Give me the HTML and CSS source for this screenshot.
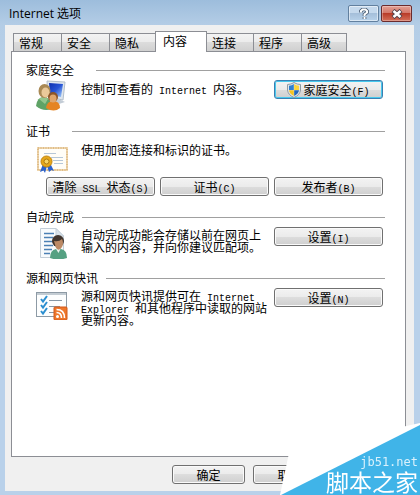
FILE: index.html
```html
<!DOCTYPE html>
<html lang="zh-CN">

<head>
    <meta charset="UTF-8">
    <title>Internet 选项</title>
    <link rel="stylesheet" href="styles.css">
</head>

<body>
    <div class="window">
        <!-- 标题栏 -->
        <div class="title-bar">
            <h1>Internet 选项</h1>
            <button type="button" class="win-btn" aria-label="帮助">
                <svg width="12" height="12" viewBox="0 0 12 12">
                    <path d="M3 4.500V3L4.500 1.500H7.500L9 3V4.500L6.500 6.500V8M6.500 9V11" fill="none" stroke="#44566c" stroke-width="3.6" />
                    <path d="M3 4.500V3L4.500 1.500H7.500L9 3V4.500L6.500 6.500V8M6.500 9V11" fill="none" stroke="#fff" stroke-width="2" />
                </svg>
            </button>
            <button type="button" class="win-btn win-close" aria-label="关闭">
                <svg width="12" height="10" viewBox="0 0 12 10">
                    <path d="M2 1.5L10 8.5M10 1.5L2 8.5" stroke="#53424a" stroke-width="4.4" />
                    <path d="M2.5 2L9.5 8M9.5 2L2.5 8" stroke="#fff" stroke-width="2.6" />
                </svg>
            </button>
        </div>

        <div class="client">
            <!-- 选项卡 -->
            <div class="tabs" role="tablist">
                <button type="button" role="tab" class="tab">常规</button>
                <button type="button" role="tab" class="tab">安全</button>
                <button type="button" role="tab" class="tab">隐私</button>
                <button type="button" role="tab" class="tab active" aria-selected="true">内容</button>
                <button type="button" role="tab" class="tab">连接</button>
                <button type="button" role="tab" class="tab">程序</button>
                <button type="button" role="tab" class="tab">高级</button>
            </div>

            <div class="panel">
                <div class="group">
                    <h2 class="group-title wide">家庭安全</h2>
                    <div class="row">
                        <svg class="icon" viewBox="0 0 32 32">
                            <defs>
                                <linearGradient id="screen" x1="0" y1="0" x2="1" y2="1">
                                    <stop offset="0" stop-color="#0d2fae" />
                                    <stop offset=".5" stop-color="#2855d6" />
                                    <stop offset="1" stop-color="#a9d4fa" />
                                </linearGradient>
                            </defs>
                            <path d="M11 1L29 2L27 20L12 17Z" fill="#dfe6ee" stroke="#b4bfca" />
                            <path d="M13 3L27 4L25 17L14 15Z" fill="url(#screen)" />
                            <path d="M19 19L25 20L29 22L23 24L17 22Z" fill="#c3ccd6" />
                            <path d="M0 26Q1 17 8 17Q15 17 16 29Q7 32 0 26Z" fill="#5fa366" />
                            <path d="M3 19Q8 15 12 19L9 24Z" fill="#93c68d" />
                            <ellipse cx="8.500" cy="11" rx="6" ry="7" fill="#a98955" />
                            <ellipse cx="9.500" cy="12.500" rx="4" ry="5" fill="#eac99a" />
                            <path d="M10 28Q11 21 17 21Q24 21 24 28Q18 33 10 28Z" fill="#e58422" />
                            <circle cx="17" cy="17" r="5" fill="#8c5528" />
                            <ellipse cx="17" cy="18.500" rx="3.500" ry="4" fill="#dfa66c" />
                        </svg>
                        <p>控制可查看的<span class="en"> Internet </span>内容。</p>
                        <button type="button" class="btn default">
                            <svg width="14" height="16" viewBox="0 0 14 16">
                                <path d="M7 .5Q10 2.500 13.500 2.500V8Q13 13 7 15.500Q1 13 .5 8V2.500Q4 2.500 7 .5Z" fill="#e3e8ea" stroke="#8e9aa3" />
                                <path d="M6.800 2V8H2V3.800Q5 3.600 6.800 2Z" fill="#2f7fd0" />
                                <path d="M7.200 2Q9 3.600 12 3.800V8H7.200Z" fill="#fbd43a" />
                                <path d="M2 8.300H6.800V14Q2.500 12 2 8.300Z" fill="#f5c523" />
                                <path d="M12 8.300H7.200V14Q11.500 12 12 8.300Z" fill="#2468bd" />
                            </svg>
                            <span>家庭安全<span class="en">(F)</span></span>
                        </button>
                    </div>
                </div>

                <div class="group">
                    <h2 class="group-title wide">证书</h2>
                    <div class="row">
                        <svg class="icon" viewBox="0 0 32 32">
                            <rect x="2" y="7" width="29" height="22" fill="#fffdf7" stroke="#eed6ad" stroke-width="2" />
                            <rect x="2" y="7" width="29" height="22" fill="none" stroke="#d9b27c" stroke-width="1.500" stroke-dasharray="1 1.500" />
                            <path d="M8 12.500H20M15 16.500H27M17 19.500H27M18 22.500H27" stroke="#b6c7d8" />
                            <path d="M7 23L4 31L7.500 29.500L9 32L11 25L13 31L15.500 29L18 30L14 22Z" fill="#2b62cd" />
                            <circle cx="10.500" cy="20.500" r="5.500" fill="#e6a719" stroke="#c0840e" />
                            <circle cx="10.500" cy="20.500" r="2.500" fill="#f7d563" stroke="#ad7912" />
                        </svg>
                        <p>使用加密连接和标识的证书。</p>
                    </div>
                    <div class="cert-buttons">
                        <button type="button" class="btn">清除<span class="en"> SSL </span>状态<span class="en">(S)</span></button>
                        <button type="button" class="btn">证书<span class="en">(C)</span></button>
                        <button type="button" class="btn">发布者<span class="en">(B)</span></button>
                    </div>
                </div>

                <div class="group">
                    <h2 class="group-title">自动完成</h2>
                    <div class="row">
                        <svg class="icon" viewBox="0 0 32 32">
                            <path d="M4.500 1.500H20L27.500 9V30.500H4.500Z" fill="#f8fbfd" stroke="#c3ced8" />
                            <path d="M20 1.500V9H27.500Z" fill="#d8e2ea" stroke="#c3ced8" />
                            <path d="M8 6.500H18M8 10.500H17M8 14.500H17M8 18.500H17M8 22.500H16M8 26.500H14" stroke="#4b80b5" stroke-width="1.500" />
                            <path d="M14 31Q14 23 20 22H25Q31 23 31 31Q22 34 14 31Z" fill="#55a182" />
                            <path d="M20 22L22.500 26L25 21Z" fill="#e8f1ed" />
                            <ellipse cx="22" cy="14" rx="6" ry="6" fill="#41352e" />
                            <path d="M18 14Q23 15 26 12Q28 16 26 20Q23 25 20 21Z" fill="#bc8a66" />
                        </svg>
                        <p class="multi">自动完成功能会存储以前在网页上<br>输入的内容，并向你建议匹配项。</p>
                        <button type="button" class="btn">设置<span class="en">(I)</span></button>
                    </div>
                </div>

                <div class="group">
                    <h2 class="group-title">源和网页快讯</h2>
                    <div class="row">
                        <svg class="icon" viewBox="0 0 32 32">
                            <rect x=".5" y="4.500" width="30" height="24" fill="#fdfefe" stroke="#8d9aa5" />
                            <path d="M1 6H30" stroke="#c3ccd3" stroke-width="2" />
                            <path d="M13 12.500H26M13 18.500H24M13 24.500H18" stroke="#8797a5" />
                            <path d="M5 11L7 13.500L11 8M5 17L7 19.500L11 14M5 23L7 25.500L11 20" fill="none" stroke="#2c8fd0" stroke-width="2" />
                            <rect x="18" y="19" width="13" height="13" rx="1" fill="#ee772b" stroke="#d2591a" />
                            <circle cx="21.500" cy="28.500" r="1.500" fill="#fff" />
                            <path d="M20.500 24.500Q25.500 24.500 25.500 30M20.500 21.500Q28.500 21.500 28.500 30" fill="none" stroke="#fff" stroke-width="1.600" />
                        </svg>
                        <p class="multi">源和网页快讯提供可在<span class="en"> Internet</span><br><span class="en">Explorer </span>和其他程序中读取的网站<br>更新内容。</p>
                        <button type="button" class="btn">设置<span class="en">(N)</span></button>
                    </div>
                </div>
            </div>

            <div class="footer">
                <button type="button" class="btn">确定</button>
                <button type="button" class="btn">取消</button>
            </div>
        </div>
    </div>

    <!-- 右下角站点标志 -->
    <div class="mark">
        <svg width="140" height="72" viewBox="0 0 140 72">
            <path d="M9 30L50 18L90 11L140 0V72H0Z" fill="#fff" />
            <path d="M140 2V72H1Z" fill="#40b4e8" />
        </svg>
        <div class="mark-text">
            <span class="mark-site">jb51.net</span>
            <span class="mark-name">脚本之家</span>
        </div>
    </div>
</body>

</html>
```
FILE: styles.css
```css
* {
    box-sizing: border-box;
    margin: 0;
    padding: 0;
}

body,
button {
    font-family: "Noto Sans CJK SC", sans-serif;
    font-size: 12px;
    color: #000;
}

.window {
    display: flex;
    flex-direction: column;
    min-height: 100vh;
    padding: 0 6px 4px 5px;
    background: linear-gradient(#9dbddc, #b4cde6 25px, #b9d1ea 80px);
}

/* 标题栏 */
.title-bar {
    display: flex;
    align-items: center;
    gap: 2px;
    height: 25px;
    padding: 2px 2px 0 4px;
}

.title-bar h1 {
    flex: 1;
    font-family: "Open Sans", "Noto Sans CJK SC", sans-serif;
    font-size: 12px;
    font-weight: normal;
    line-height: 20px;
}

.win-btn {
    display: flex;
    align-items: center;
    justify-content: center;
    width: 31px;
    height: 17px;
    border: 1px solid #62809f;
    border-radius: 2px;
    background: linear-gradient(#c5d9ed 50%, #a5bfda 50%, #b8d2ea);
    box-shadow: inset 0 0 0 1px rgba(255, 255, 255, .5);
}

.win-close {
    border-color: #6b2b2d;
    background: linear-gradient(#e3a094, #d27466 50%, #b93c29 50%, #d5705a);
    box-shadow: inset 0 0 0 1px rgba(255, 255, 255, .3);
}

.client {
    flex: 1;
    display: flex;
    flex-direction: column;
    padding: 6px 8px 7px 6px;
    background: #f0f0f0;
}

/* 选项卡 */
.tabs {
    display: flex;
    align-items: flex-end;
    height: 20px;
    padding-left: 2px;
}

.tab {
    width: 48px;
    height: 18px;
    padding-left: 5px;
    border: 1px solid #8c8e94;
    border-right-width: 0;
    border-bottom: 0;
    background: linear-gradient(#f3f3f3, #ebebeb 50%, #dcdcdc 50%, #d0d0d0);
    line-height: 18px;
    text-align: left;
}

.tab:last-child {
    width: 46px;
    border-right-width: 1px;
}

.tab.active {
    position: relative;
    z-index: 1;
    width: 52px;
    height: 21px;
    margin: 0 0 -1px -2px;
    padding: 0 0 2px 7px;
    border-right-width: 1px;
    background: #fff;
}

.tab.active + .tab {
    width: 46px;
    border-left-width: 0;
}

.panel {
    flex: 1;
    padding: 10px 20px 10px 14px;
    border: 1px solid #8c8e94;
    background: #fff;
}

/* 分组 */
.group-title {
    display: flex;
    align-items: center;
    gap: 8px;
    font-size: 12px;
    font-weight: normal;
    line-height: 16px;
}

.group-title.wide {
    gap: 22px;
}

.group-title::after {
    content: "";
    flex: 1;
    height: 1px;
    background: #a0a0a0;
}

.row {
    display: flex;
    align-items: flex-start;
    padding: 2px 2px 11px 10px;
}

.icon {
    flex: none;
    width: 32px;
    height: 32px;
    margin-right: 13px;
}

.row p {
    flex: 1;
    line-height: 18px;
    white-space: nowrap;
}

.row p.multi {
    padding-top: 2px;
    line-height: 12px;
}

/* 英文用等宽字体，宽度为汉字的一半 */
.en {
    font-family: "Liberation Mono", monospace;
    font-size: 10px;
    line-height: 0;
}

.btn {
    width: 109px;
    height: 19px;
    border: 1px solid #707070;
    border-radius: 3px;
    background: linear-gradient(#f3f3f3, #ebebeb 50%, #dddddd 50%, #cfcfcf);
    box-shadow: inset 0 0 0 1px #fafafa;
    line-height: 16px;
    text-align: center;
    white-space: nowrap;
}

.btn.default {
    display: flex;
    align-items: center;
    justify-content: center;
    gap: 2px;
    border-color: #3c7fb1;
    box-shadow: inset 0 0 0 1px #48c9ee;
}

.cert-buttons {
    display: flex;
    justify-content: flex-end;
    gap: 5px;
    margin-top: -7px;
    padding: 0 2px 13px 0;
}

.footer {
    display: flex;
    justify-content: flex-end;
    gap: 8px;
    padding: 8px 80px 0 0;
}

.footer .btn {
    width: 73px;
}

/* 站点标志 */
.mark {
    position: fixed;
    right: 0;
    bottom: 0;
    width: 140px;
    height: 72px;
}

.mark-text {
    position: absolute;
    right: 0;
    bottom: 0;
    display: flex;
    flex-direction: column;
    align-items: flex-end;
    padding: 0 2px 2px 0;
    color: #fff;
}

.mark-site {
    font-family: "DejaVu Sans Mono", monospace;
    font-size: 12px;
    line-height: 14px;
    color: #d9f1fc;
}

.mark-name {
    font-size: 23px;
    line-height: 24px;
}
```
